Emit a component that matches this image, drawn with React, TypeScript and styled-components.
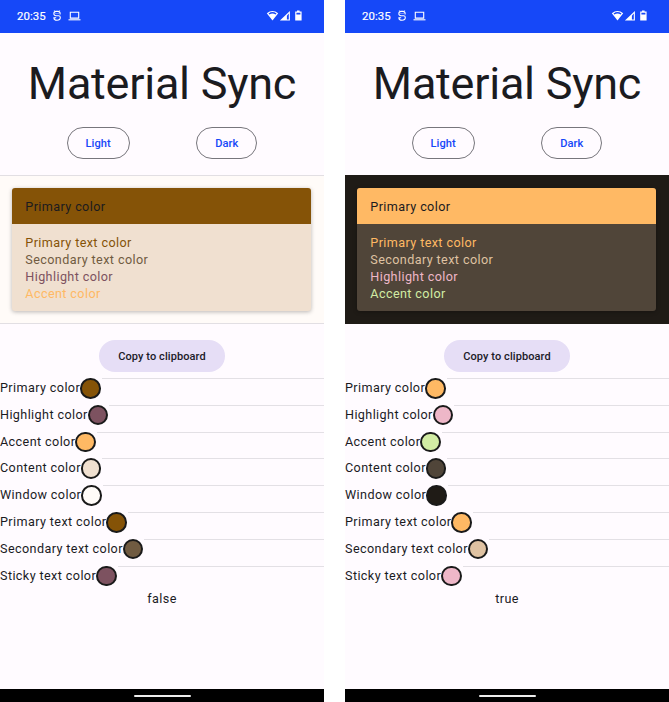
import React from 'react';
import styled, { createGlobalStyle } from 'styled-components';

const GlobalStyle = createGlobalStyle`
  * { box-sizing: border-box; }
  body {
    margin: 0;
    background: #fff;
    font-family: Roboto, "Liberation Sans", sans-serif;
    color: #1b1b1f;
  }
`;

interface Palette {
  primary: string;
  highlight: string;
  accent: string;
  content: string;
  window: string;
  primaryText: string;
  secondaryText: string;
  sticky: string;
  divider: string;
}

const lightPalette: Palette = {
  primary: '#855307',
  highlight: '#7d5260',
  accent: '#ffb964',
  content: '#f0e0d0',
  window: '#fffbf8',
  primaryText: '#855307',
  secondaryText: '#705b41',
  sticky: '#7d5260',
  divider: '#e2dfe3',
};

const darkPalette: Palette = {
  primary: '#ffb964',
  highlight: '#eeb7c8',
  accent: '#d2eca4',
  content: '#504539',
  window: '#1f1b16',
  primaryText: '#ffb964',
  secondaryText: '#dfc2a2',
  sticky: '#eeb7c8',
  divider: '#1f1b16',
};

const Screens = styled.div`
  display: flex;
  justify-content: space-between;
  width: 669px;
  height: 702px;
  overflow: hidden;
`;

const Phone = styled.section`
  display: flex;
  flex-direction: column;
  width: 324px;
  height: 702px;
  background: #fffbff;
`;

const StatusBar = styled.header`
  display: flex;
  align-items: center;
  flex: none;
  height: 32.5px;
  padding: 0 22px 0 17px;
  background: #1648f8;
  color: #fff;
`;

const Clock = styled.span`
  width: 34.5px;
  font-size: 11.4px;
  font-weight: 400;
  letter-spacing: 0.1px;
  -webkit-text-stroke: 0.2px #fff;
`;

const StatusIcons = styled.svg<{ $end?: boolean }>`
  display: block;
  margin-left: ${({ $end }) => ($end ? 'auto' : '0')};
`;

const Title = styled.h1`
  margin: 26.5px 0 0;
  height: 50px;
  font-size: 45px;
  line-height: 50px;
  font-weight: 400;
  letter-spacing: -0.25px;
  text-align: center;
  white-space: nowrap;
`;

const ModeButtons = styled.div`
  display: flex;
  justify-content: space-evenly;
  margin: 18px 0 16px;
`;

const OutlineButton = styled.button`
  height: 32px;
  padding: 0 17.8px;
  border: 1px solid #77767c;
  border-radius: 16px;
  background: transparent;
  color: #1648f8;
  font: 500 11.1px Roboto, "Liberation Sans", sans-serif;
  letter-spacing: 0.08px;
`;

const Preview = styled.div<{ $bg: string; $line: string }>`
  flex: none;
  height: 149px;
  padding: 12px 13px 12px 12px;
  border-top: 1px solid ${({ $line }) => $line};
  border-bottom: 1px solid ${({ $line }) => $line};
  background: ${({ $bg }) => $bg};
`;

const Card = styled.div<{ $bg: string }>`
  height: 123px;
  border-radius: 3px;
  overflow: hidden;
  background: ${({ $bg }) => $bg};
  box-shadow: 0 1px 4px rgba(0, 0, 0, 0.28);
  font-size: 12.6px;
  letter-spacing: 0.4px;
`;

const CardHeader = styled.div<{ $bg: string }>`
  height: 36px;
  padding-left: 13.3px;
  line-height: 37px;
  background: ${({ $bg }) => $bg};
`;

const CardBody = styled.div`
  padding: 9.6px 13.3px;
`;

const CardLine = styled.div<{ $color: string }>`
  height: 17.1px;
  line-height: 17.1px;
  color: ${({ $color }) => $color};
`;

const CopyButton = styled.button`
  align-self: center;
  flex: none;
  height: 32px;
  margin: 16px 0 6px;
  padding: 0 19px;
  border: 0;
  border-radius: 16px;
  background: #e6def6;
  color: #1c1a28;
  font: 500 11px Roboto, "Liberation Sans", sans-serif;
  letter-spacing: 0.08px;
`;

const ColorRow = styled.div`
  display: flex;
  align-items: flex-start;
  flex: none;
  height: 26.83px;
`;

const Label = styled.span`
  font-size: 12.6px;
  line-height: 19px;
  letter-spacing: 0.4px;
  white-space: nowrap;
`;

const Swatch = styled.span<{ $color: string }>`
  flex: none;
  width: 20.5px;
  height: 20.5px;
  border: 2px solid #1a1a1a;
  border-radius: 50%;
  background: ${({ $color }) => $color};
`;

const Rule = styled.span`
  flex: 1;
  height: 1px;
  margin-left: 1px;
  background: #e3e0e5;
`;

const Flag = styled.div`
  margin-top: -3.5px;
  font-size: 12.6px;
  line-height: 19px;
  letter-spacing: 0.4px;
  text-align: center;
`;

const NavBar = styled.footer`
  display: flex;
  align-items: center;
  justify-content: center;
  height: 13px;
  margin-top: auto;
  background: #000;
`;

const HomeHandle = styled.span`
  width: 57px;
  height: 2px;
  margin-top: 1px;
  border-radius: 1px;
  background: #eee;
`;

const NotificationIcons = () => (
  <StatusIcons width="30" height="14" viewBox="0 0 30 14" fill="none" stroke="#fff">
    <path d="M2.3 1.4 3.2 2.5M7.7 1.4 6.8 2.5" strokeWidth="0.8" />
    <path d="M1.9 5.4V4.5Q1.9 2.4 4 2.4H6Q8.1 2.4 8.1 4.5V5.4M1.9 4.8Q1.9 6.7 4 6.7H6.6Q8.3 6.7 8.3 8.6Q8.3 11.3 5 11.3Q1.9 11.3 1.9 8.7H4.2" strokeWidth="1.1" />
    <path d="M3.6 4.5H4.4M5.6 4.5H6.4" strokeWidth="0.9" />
    <path d="M18.3 9.1V3.3H26.7V9.1Z" strokeWidth="1.1" />
    <path d="M16.5 10.8H28.5" strokeWidth="1.1" />
  </StatusIcons>
);

const SystemIcons = () => (
  <StatusIcons $end width="36" height="14" viewBox="0 0 36 14">
    <path d="M0.8 4.2Q6.5-0.2 12.2 4.2L6.5 11.6Z" fill="#fff" />
    <path d="M2.5 4.4Q6.5 1.8 10.5 4.4L9.6 5.4Q6.5 3.6 3.4 5.4Z" fill="#1648f8" />
    <path fillRule="evenodd" d="M23.9 1.9V11.5H13.9ZM22.8 4.6 20.9 6.7V10.4H22.8Z" fill="#fff" />
    <path fillRule="evenodd" d="M31 1.4H33.6V2.5H35.6V11.6H29.2V2.5H31ZM30.4 3.8V5.5H34.4V3.8Z" fill="#fff" />
  </StatusIcons>
);

const PhoneScreen = ({ palette, flag }: { palette: Palette; flag: string }) => {
  const rows: [string, string][] = [
    ['Primary color', palette.primary],
    ['Highlight color', palette.highlight],
    ['Accent color', palette.accent],
    ['Content color', palette.content],
    ['Window color', palette.window],
    ['Primary text color', palette.primaryText],
    ['Secondary text color', palette.secondaryText],
    ['Sticky text color', palette.sticky],
  ];
  return (
    <Phone>
      <StatusBar>
        <Clock>20:35</Clock>
        <NotificationIcons />
        <SystemIcons />
      </StatusBar>
      <Title>Material Sync</Title>
      <ModeButtons>
        <OutlineButton>Light</OutlineButton>
        <OutlineButton>Dark</OutlineButton>
      </ModeButtons>
      <Preview $bg={palette.window} $line={palette.divider}>
        <Card $bg={palette.content}>
          <CardHeader $bg={palette.primary}>Primary color</CardHeader>
          <CardBody>
            <CardLine $color={palette.primaryText}>Primary text color</CardLine>
            <CardLine $color={palette.secondaryText}>Secondary text color</CardLine>
            <CardLine $color={palette.highlight}>Highlight color</CardLine>
            <CardLine $color={palette.accent}>Accent color</CardLine>
          </CardBody>
        </Card>
      </Preview>
      <CopyButton>Copy to clipboard</CopyButton>
      {rows.map(([label, color]) => (
        <ColorRow key={label}>
          <Label>{label}</Label>
          <Swatch $color={color} />
          <Rule />
        </ColorRow>
      ))}
      <Flag>{flag}</Flag>
      <NavBar>
        <HomeHandle />
      </NavBar>
    </Phone>
  );
};

export default function App() {
  return (
    <>
      <GlobalStyle />
      <Screens>
        <PhoneScreen palette={lightPalette} flag="false" />
        <PhoneScreen palette={darkPalette} flag="true" />
      </Screens>
    </>
  );
}
